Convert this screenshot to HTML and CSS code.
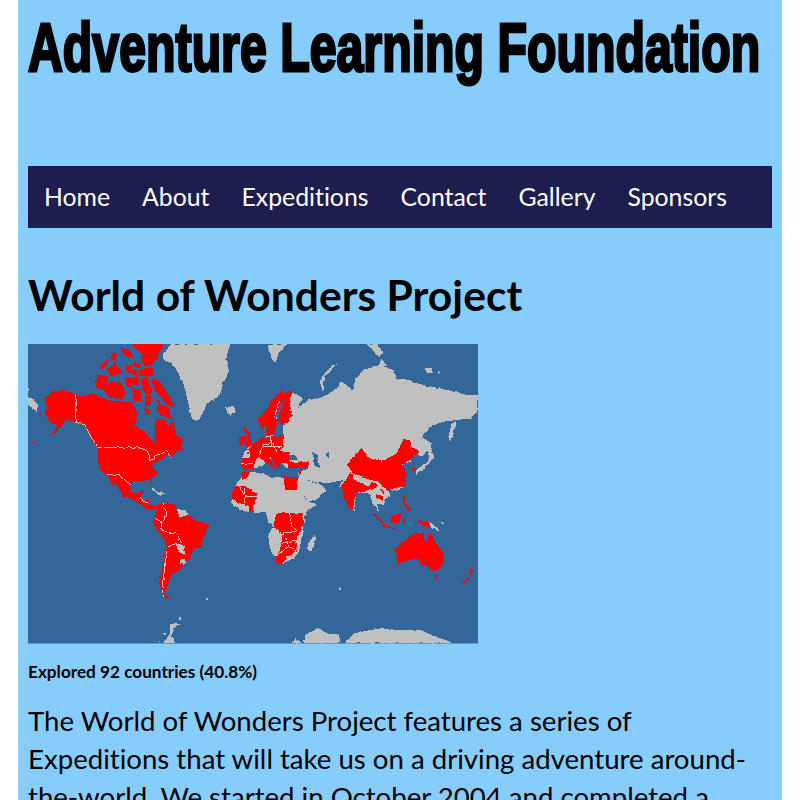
FILE: index.html
```html
<!DOCTYPE html>
<html lang="en">
<head>
<meta charset="utf-8">
<title>World of Wonders Project</title>
<link rel="stylesheet" href="styles.css">
</head>
<body>
<div class="page">
  <header class="masthead"><h1 class="site-title">Adventure Learning Foundation</h1></header>
  <nav class="nav">
    <a href="#">Home</a><a href="#">About</a><a href="#">Expeditions</a><a href="#">Contact</a><a href="#">Gallery</a><a href="#">Sponsors</a>
  </nav>
  <h2 class="heading">World of Wonders Project</h2>
  <svg class="map" viewBox="28 344 450 300" width="450" height="300" shape-rendering="crispEdges" role="img" aria-label="World map of explored countries">
    <defs>
      <filter id="rough" x="0" y="0" width="100%" height="100%" filterUnits="objectBoundingBox" color-interpolation-filters="sRGB">
        <feTurbulence type="fractalNoise" baseFrequency="0.16" numOctaves="2" seed="4"/>
        <feDisplacementMap in="SourceGraphic" scale="3.5" xChannelSelector="R" yChannelSelector="G"/>
      </filter>
    </defs>
    <rect x="28" y="344" width="450" height="300" fill="#336699"/>
    <g filter="url(#rough)">
    <rect x="28" y="344" width="450" height="300" fill="#336699"/>
    <g transform="translate(20 340) scale(.33333)">
      <g fill="#c0c0c0">
        <path d="M455 12H632L615 60 628 90 610 130 600 165 560 195 535 245 515 235 505 190 490 130 465 80 430 55 430 40Z"/>
        <path d="M615 205 640 198 648 212 630 225Z"/>
        <path d="M24 170 40 180 55 195 50 215 35 205 24 195ZM24 142 32 147 24 152Z"/>
        <path d="M395 445 420 455 440 462 420 464 400 452Z"/>
        <path d="M450 850 470 853 485 850 465 862 455 885 465 910H430L450 880ZM476 830 483 830 483 836 476 836ZM558 774 563 774 563 779 558 779ZM432 880 437 880 437 885 432 885ZM414 902 420 902 420 907 414 907Z"/>
      </g>
      <g fill="#f00">
        <path d="M75 175 95 155 130 150 168 165 190 170 215 160 240 170 265 180 300 185 335 185 345 205 355 220 342 255 370 270 395 300 405 310 405 235 435 240 445 260 460 245 470 285 490 300 478 320 495 328 480 330 450 350 440 345 415 365 395 380 415 400 395 415 400 440 390 420 345 425 330 435 335 460 365 470 360 480 320 470 285 430 280 440 260 405 240 390 232 355 235 320 215 300 200 265 170 245 140 240 105 280 95 285 115 255 90 250 72 210 90 205 75 190Z"/>
        <g stroke="#f00" stroke-width="5">
          <path d="M340 12H430L410 50 395 75 375 75 365 50 375 40 360 35ZM305 28 325 30 340 50 320 48ZM240 80 262 62 258 75 245 85ZM262 90 285 75 302 95 275 105ZM280 40 288 42 285 60 276 55ZM355 90 395 85 398 105 360 105ZM340 90 350 92 348 105 338 100ZM320 75 332 78 330 95 320 90ZM345 70 360 72 358 82 345 80Z"/>
          <path d="M235 108 262 110 255 140 275 125 300 130 315 160 305 175 270 170 255 150 230 140ZM320 115 336 118 334 140 320 135ZM340 115 358 112 352 135 340 130ZM365 118 380 115 395 155 385 165 370 150ZM395 118 412 122 440 160 460 195 440 190 415 160 400 140ZM338 145 355 150 362 180 345 180ZM378 170 392 170 388 195 378 195ZM420 195 440 200 455 235 430 225 410 210ZM375 208 390 210 385 222 378 220ZM410 182 418 182 416 190Z"/>
          <path d="M305 450 330 465 355 460 370 455 355 475 370 485 385 480 385 495 405 502 400 508 380 505 360 490 340 475 310 465Z"/>
        </g>
        <path d="M405 500 430 490 470 495 475 530 505 525 530 545 567 555 550 590 545 620 525 625 510 655 490 675 480 690 455 705 445 730 435 760 452 780 430 770 418 730 430 670 438 610 420 580 398 550 405 530 410 510Z"/>
        <path d="M36 305 42 305 42 309 36 309ZM58 222 63 222 63 227 58 227Z"/>
      </g>
      <g fill="#c0c0c0">
        <path d="M470 505 500 515 505 525 478 532ZM465 610 490 615 497 645 475 635ZM480 655 500 665 490 675 480 670Z"/>
      </g>
      <g fill="none" stroke="#f2b8b8" stroke-width="3">
        <path d="M168 165V245L195 255 215 295 235 322H345L375 328 390 350 388 362 410 345 440 335 452 350"/>
        <path d="M260 405H300L330 435M360 470 375 485 385 490M430 490 440 520 425 550 425 570 445 580 470 580 485 610M440 630 435 670 428 730 432 770M405 535 430 550M445 620 470 610"/>
      </g>
    </g>
    <g transform="translate(240 340) scale(.33333)">
      <g fill="#c0c0c0">
        <path d="M130 290 130 260 135 250 155 210 145 180 150 155 190 175 170 205 205 180 240 175 285 150 305 125 340 150 345 120 370 90 420 75 460 90 470 115 510 120 550 135 600 145 640 155 680 165 715 165 715 205 690 235 650 240 610 245 570 260 545 290 575 310 570 335 540 350 525 330 510 370 490 370 480 395 495 415 490 440 465 455 440 445 450 470 430 480 432 495 410 490 420 520 428 530 405 500 395 480 385 460 345 460 345 510 325 500 310 450 300 440 310 420 260 430 235 425 260 450 235 475 205 485 190 455 170 430 175 400 205 385 140 385 120 365 100 350 70 380 40 385 10 385 5 355 25 320 60 300 85 285Z"/>
        <path d="M-25 475-5 425 20 395 70 400 95 415 135 415 175 420 190 450 205 485 230 492 200 515 195 535 190 580 180 625 165 655 125 670 110 672 105 650 90 620 85 590 100 560 85 545 75 515 50 520 0 510-25 490Z"/>
        <path d="M225 580 228 595 215 630 205 630 205 610Z"/>
        <path d="M80 20 100 12H140L115 40 105 70 95 50Z"/>
        <path d="M295 70 260 90 240 130 250 155 255 110ZM380 12H410L430 40 415 50ZM555 85 580 85 580 100 560 100ZM590 95 602 100 595 102ZM425 55 440 78 415 80Z"/>
        <path d="M650 245 635 250 625 290 635 305 645 265ZM570 320 582 350 555 385 525 402 525 392 565 362Z"/>
        <path d="M565 545 585 555 600 575 575 565ZM600 545 610 550 605 555ZM620 555 624 555 624 560Z"/>
        <path d="M150 910 170 895 185 910ZM188 910 195 885 235 865 260 880 298 885 295 910ZM315 910 340 880 420 865 470 870 540 870 590 890 640 910Z"/>
        <path d="M298 745H303V750H298Z"/>
      </g>
      <g fill="#336699">
        <path d="M215 335 235 345 232 365 245 385 225 378 222 355ZM258 340 270 335 268 350 258 350Z"/>
        <path d="M205 420 222 425 250 440 232 432ZM180 450 205 485 198 478Z" />
        <path d="M75 380 115 390 130 400 170 400 168 412 135 412 95 410 70 395ZM135 345 165 345 175 360 140 360Z"/>
      </g>
      <g fill="#f00">
        <g stroke="#f00" stroke-width="6">
          <path d="M130 155 115 165 95 185 85 210 60 235 65 265 85 250 85 285 100 280 110 240 105 220 120 185 130 170Z"/>
          <path d="M150 155 135 165 130 195 120 225 120 250 140 245 155 225 145 195Z"/>
          <path d="M15 265 25 285 40 315 20 318 25 295ZM0 295 15 290 15 305 0 310Z"/>
          <path d="M25 330 65 295 125 290 128 320 110 335 145 340 145 365 120 365 115 385 100 355 80 340 100 380 85 370 60 345 50 355 30 350Z"/>
        </g>
        <path d="M5 355 50 350 40 385 10 390Z"/>
        <path d="M140 365H205V385H145ZM135 412H170V450H135ZM180 385 190 390 178 405Z"/>
        <path d="M5 395 30 395 20 415 5 420Z"/>
        <path d="M-20 440 15 438 50 460 50 475 45 490 38 515 28 515 25 495-5 490-25 475Z"/>
        <path d="M320 375 345 345 365 325 385 350 425 365 470 340 490 298 510 300 515 320 540 335 510 360 485 375 500 405 495 435 460 450 435 445 415 425 390 420 345 405Z"/>
        <path d="M305 440 320 410 335 395 345 420 385 440 395 425 415 435 405 445 380 450 345 460 340 510 325 500 312 470Z"/>
        <path d="M515 380 525 390 515 395ZM410 460 430 470 425 480 408 475ZM420 450 435 455 430 462ZM490 465 497 465 493 485 505 500 512 510 500 512 495 495 487 490Z"/>
        <path d="M400 515 420 535 435 555 425 550 405 530ZM430 555 465 565V567L430 560ZM450 535 475 520 485 515 480 545 455 547ZM490 540 497 540 495 550 485 545ZM490 530H505V533H490ZM535 540 565 545 570 565 545 555ZM525 545 530 548 526 550Z"/>
        <path d="M465 630 490 605 510 590 525 580 550 578 555 610 570 580 585 605 610 640 612 665 595 690 570 690 555 670 545 675 535 655 500 662 475 672 470 660Z"/>
        <path d="M583 705H595L592 717 585 715ZM690 685 705 690 695 700 692 705 695 705 665 730 668 735 690 715Z"/>
        <path d="M100 555 110 520 150 518 190 520 192 560 175 580 165 605 170 630 150 645 130 668 112 672 103 650 118 640 125 605 125 580 100 560Z"/>
      </g>
      <g fill="none" stroke="#f2b8b8" stroke-width="3">
        <path d="M60 345 65 320 125 320M95 292V320M70 315 100 310 110 335M120 180 105 220 110 240M25 330 30 350M5 370H40M-5 435 15 470 50 470M15 440V490"/>
        <path d="M150 520 155 560 175 575M125 580 165 575M125 610 165 600M140 595 145 620 120 640M145 620 170 630"/>
      </g>
      <path fill="#c0c0c0" d="M143 647a5 5 0 1 0 .1 0Z"/>
    </g>
    </g>
    <rect x="28" y="643" width="450" height="1" fill="#87cdfb" fill-opacity=".5"/>
  </svg>
  <p class="caption">Explored 92 countries (40.8%)</p>
  <p class="intro">The World of Wonders Project features a series of Expeditions that will take us on a driving adventure around-the-world. We started in October 2004 and completed a</p>
</div>
</body>
</html>
```

FILE: styles.css
```css
html, body {
  margin: 0;
  padding: 0;
  background: #fff;
  overflow: hidden;
  height: 800px;
}
.page {
  margin: 0 18px;
  padding: 0 10px;
  height: 800px;
  background: #87cdfb;
  color: #000;
  font-family: Lato, "Open Sans", sans-serif;
  font-variant-ligatures: none;
}
.masthead {
  height: 166px;
}
.site-title {
  margin: 0;
  padding-top: 7px;
  width: 1100px;
  font-family: "Liberation Sans", sans-serif;
  font-size: 68px;
  line-height: 80px;
  font-weight: 700;
  white-space: nowrap;
  -webkit-text-stroke: 3px #000;
  transform: scaleX(.71);
  transform-origin: left top;
}
.nav {
  display: flex;
  gap: 32px;
  align-items: center;
  height: 60px;
  padding-bottom: 2px;
  padding-left: 16px;
  background: #1e1e4e;
}
.nav a {
  color: #fff;
  text-decoration: none;
  font-size: 24.8px;
}
.heading {
  margin: 0;
  padding-top: 39px;
  font-size: 42.6px;
  line-height: 56px;
  font-weight: 700;
}
.map {
  display: block;
  margin-top: 21px;
}
.caption {
  margin: 0;
  padding-top: 16px;
  font-size: 17.2px;
  line-height: 24px;
  font-weight: 700;
}
.intro {
  margin: 0;
  padding-top: 18px;
  font-size: 27.6px;
  line-height: 38px;
}
```
